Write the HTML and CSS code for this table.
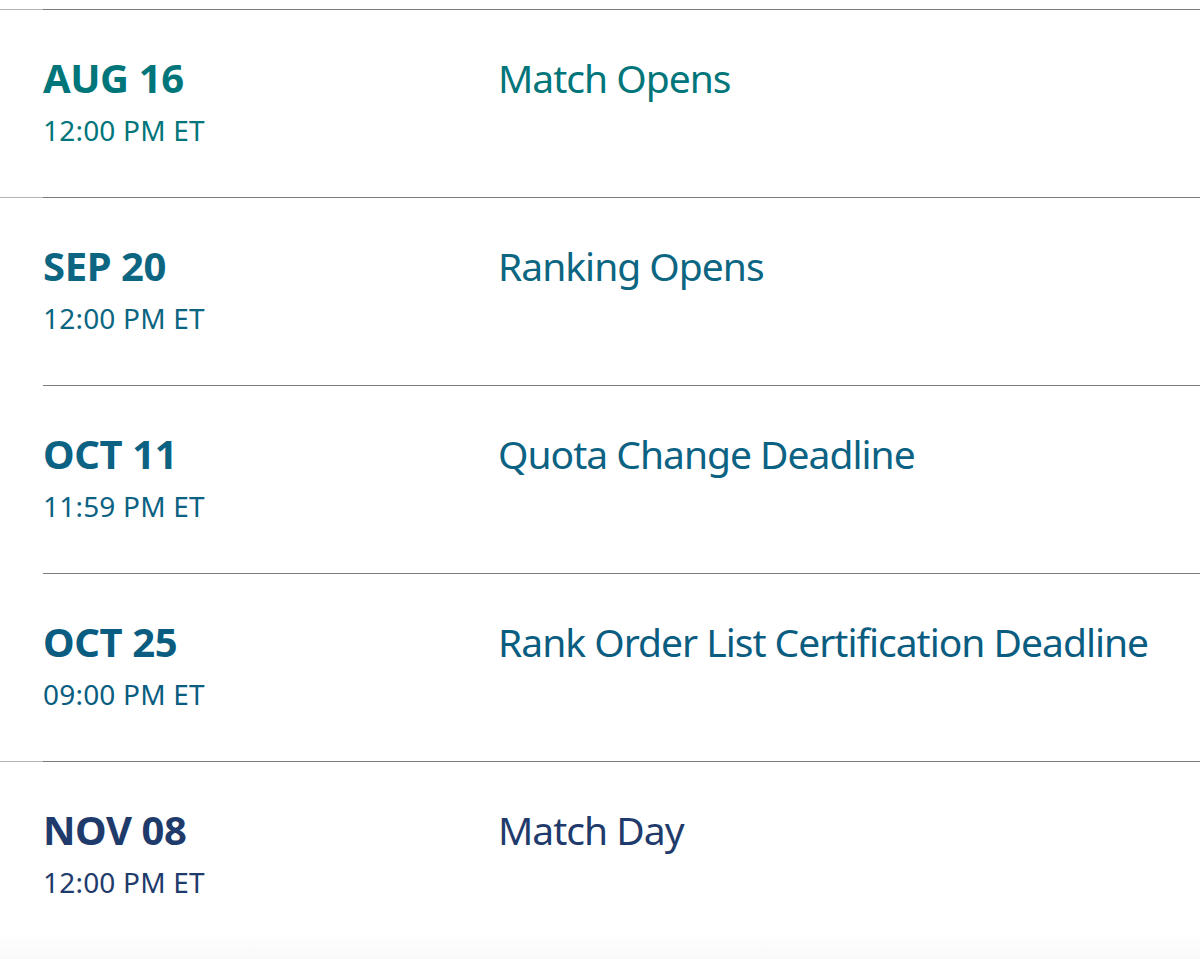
FILE: index.html
```html
<!DOCTYPE html>
<html lang="en">
<head>
<meta charset="utf-8">
<title>Match Timeline</title>
<link rel="stylesheet" href="styles.css">
</head>
<body>
<main class="timeline">
  <ul class="events">
    <li class="event event--teal event--wide">
      <div class="when">
        <div class="date">AUG 16</div>
        <div class="time">12:00 PM ET</div>
      </div>
      <div class="what">Match Opens</div>
    </li>
    <li class="event event--c2 event--wide">
      <div class="when">
        <div class="date">SEP 20</div>
        <div class="time">12:00 PM ET</div>
      </div>
      <div class="what">Ranking Opens</div>
    </li>
    <li class="event event--c3">
      <div class="when">
        <div class="date">OCT 11</div>
        <div class="time">11:59 PM ET</div>
      </div>
      <div class="what">Quota Change Deadline</div>
    </li>
    <li class="event event--c4">
      <div class="when">
        <div class="date">OCT 25</div>
        <div class="time">09:00 PM ET</div>
      </div>
      <div class="what">Rank Order List Certification Deadline</div>
    </li>
    <li class="event event--navy event--wide">
      <div class="when">
        <div class="date">NOV 08</div>
        <div class="time">12:00 PM ET</div>
      </div>
      <div class="what">Match Day</div>
    </li>
  </ul>
  <div class="fade"></div>
</main>
</body>
</html>
```
FILE: styles.css
```css
html, body {
  margin: 0;
  padding: 0;
  background: #ffffff;
}
body {
  font-family: "Noto Sans", "Open Sans", sans-serif;
  overflow: hidden;
  height: 959px;
}
.timeline {
  padding-top: 9px;
}
.events {
  list-style: none;
  margin: 0;
  padding: 0 0 0 43px;
}
.event {
  position: relative;
  display: grid;
  grid-template-columns: 455px 1fr;
  height: 188px;
  box-sizing: border-box;
  border-top: 1px solid #7a7a7a;
  padding-top: 44px;
}
.event--wide::before {
  content: "";
  position: absolute;
  left: -43px;
  top: -1px;
  width: 43px;
  height: 1px;
  background: #b4b4b4;
}
.date {
  font-size: 40px;
  font-weight: 700;
  line-height: 48px;
  letter-spacing: -0.4px;
}
.time {
  font-size: 28px;
  line-height: 36px;
  margin-top: 10px;
  letter-spacing: 0.2px;
}
.what {
  font-size: 39px;
  line-height: 48px;
  letter-spacing: -1px;
  white-space: nowrap;
}
.event--teal { color: #00757a; }
.event--c2 { color: #0c6581; }
.event--c3 { color: #0b6283; }
.event--c4 { color: #0a5d80; }
.event--navy { color: #1f3b6b; }
.fade {
  height: 30px;
  margin-top: -16px;
  background: linear-gradient(#ffffff, #f8f8f8);
}
```
